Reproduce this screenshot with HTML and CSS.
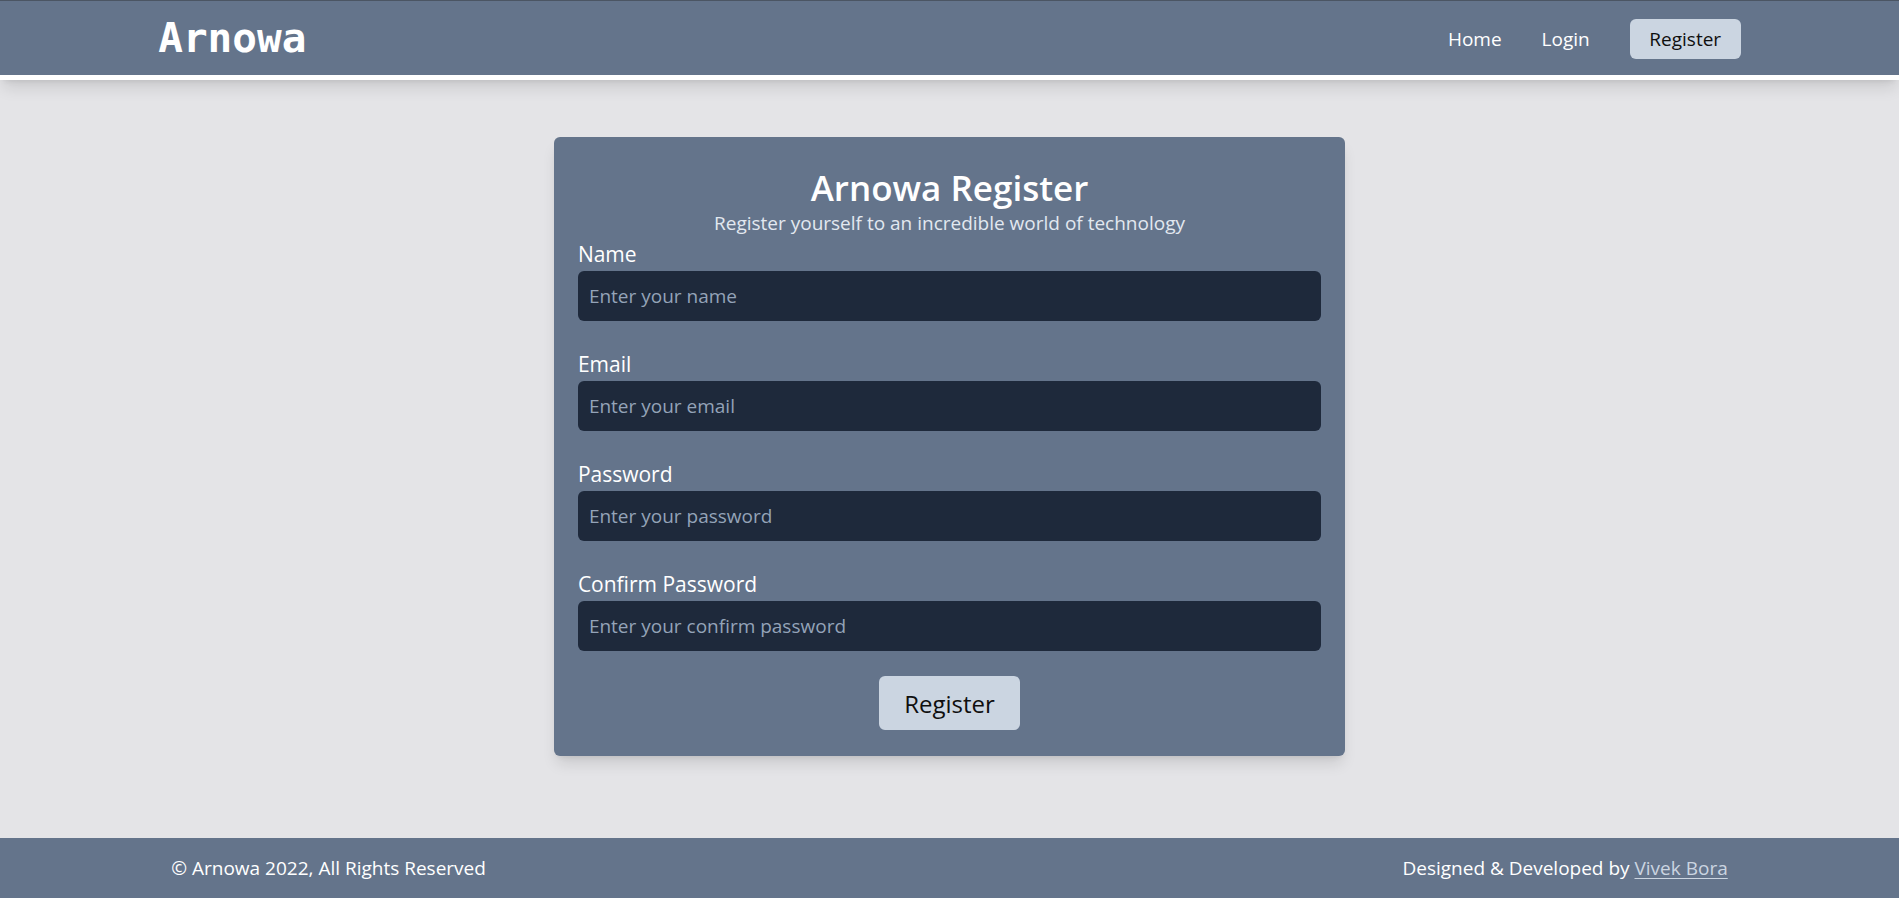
FILE: index.html
```html
<!DOCTYPE html>
<html lang="en">
<head>
<meta charset="utf-8">
<title>Arnowa Register</title>
<link rel="stylesheet" href="styles.css">
</head>
<body>
<header class="site-header">
  <div class="header-inner">
    <a class="logo" href="#">Arnowa</a>
    <nav class="nav">
      <a class="nav-link" href="#">Home</a>
      <a class="nav-link" href="#">Login</a>
      <a class="nav-link nav-active" href="#">Register</a>
    </nav>
  </div>
</header>
<main class="main">
  <form class="card">
    <h1 class="card-title">Arnowa Register</h1>
    <p class="card-sub">Register yourself to an incredible world of technology</p>
    <div class="field">
      <label class="label" for="name">Name</label>
      <input class="input" id="name" type="text" placeholder="Enter your name">
    </div>
    <div class="field">
      <label class="label" for="email">Email</label>
      <input class="input" id="email" type="email" placeholder="Enter your email">
    </div>
    <div class="field">
      <label class="label" for="pw">Password</label>
      <input class="input" id="pw" type="password" placeholder="Enter your password">
    </div>
    <div class="field field-last">
      <label class="label" for="cpw">Confirm Password</label>
      <input class="input" id="cpw" type="password" placeholder="Enter your confirm password">
    </div>
    <div class="actions">
      <button class="btn" type="button">Register</button>
    </div>
  </form>
</main>
<footer class="site-footer">
  <div class="footer-inner">
    <span>© Arnowa 2022, All Rights Reserved</span>
    <span>Designed &amp; Developed by <a class="footer-link" href="#">Vivek Bora</a></span>
  </div>
</footer>
</body>
</html>
```
FILE: styles.css
```css
* { box-sizing: border-box; }
html, body { margin: 0; padding: 0; }
body {
  min-height: 100vh;
  display: flex;
  flex-direction: column;
  background: #e4e4e7;
  font-family: "Open Sans", "Noto Sans", sans-serif;
  color: #fff;
}
a { color: inherit; text-decoration: none; }

.site-header {
  background: #64748b;
  border-top: 1px solid #4b5563;
  border-bottom: 5px solid #ffffff;
  box-shadow: 0 10px 15px -3px rgba(0,0,0,0.12), 0 4px 6px -4px rgba(0,0,0,0.1);
  position: relative;
  z-index: 1;
}
.header-inner {
  width: 83.3333%;
  margin: 0 auto;
  height: 74px;
  display: flex;
  align-items: center;
  justify-content: space-between;
}
.logo {
  font-family: "DejaVu Sans Mono", "Liberation Mono", monospace;
  font-weight: 700;
  font-size: 41px;
  color: #fff;
  margin-top: -1px;
}
.nav {
  display: flex;
  align-items: center;
  gap: 40px;
  margin-top: 2px;
}
.nav-link {
  font-size: 19px;
  line-height: 40px;
}
.nav-active {
  background: #cbd5e1;
  color: #0f0f0f;
  border-radius: 6px;
  width: 111px;
  text-align: center;
}

.main {
  flex: 1;
  display: flex;
  justify-content: center;
  align-items: flex-start;
  padding-top: 57px;
}
.card {
  width: 41.6667%;
  background: #64748b;
  border-radius: 6px;
  box-shadow: 0 10px 15px -3px rgba(0,0,0,0.12), 0 4px 6px -4px rgba(0,0,0,0.1);
  padding: 31px 24px 26px;
}
.card-title {
  margin: 0;
  text-align: center;
  font-size: 35px;
  line-height: 40px;
  font-weight: 600;
}
.card-sub {
  margin: 1px 0 0;
  text-align: center;
  font-size: 19px;
  line-height: 28px;
  color: #e2e8f0;
}
.field {
  display: flex;
  flex-direction: column;
  margin-top: 3px;
  margin-bottom: 29px;
}
.field-last { margin-bottom: 25px; }
.label {
  font-size: 21px;
  line-height: 28px;
  margin-bottom: 3px;
}
.input {
  height: 50px;
  border: none;
  border-radius: 6px;
  background: #1e293b;
  color: #fff;
  padding: 0 11px;
  font-family: inherit;
  font-size: 19px;
  outline: none;
}
.input::placeholder { color: #94a3b8; opacity: 1; }
.actions {
  display: flex;
  justify-content: center;
}
.btn {
  width: 141px;
  height: 54px;
  border: none;
  border-radius: 6px;
  background: #cbd5e1;
  color: #0f0f0f;
  font-family: inherit;
  font-size: 24px;
  cursor: pointer;
}

.site-footer {
  background: #64748b;
  height: 60px;
}
.footer-inner {
  width: 83.3333%;
  margin: 0 auto;
  height: 100%;
  padding: 0 13px;
  display: flex;
  align-items: center;
  justify-content: space-between;
  font-size: 19px;
}
.footer-link {
  color: #cbd5e1;
  text-decoration: underline;
  text-underline-offset: 3px;
}
```
